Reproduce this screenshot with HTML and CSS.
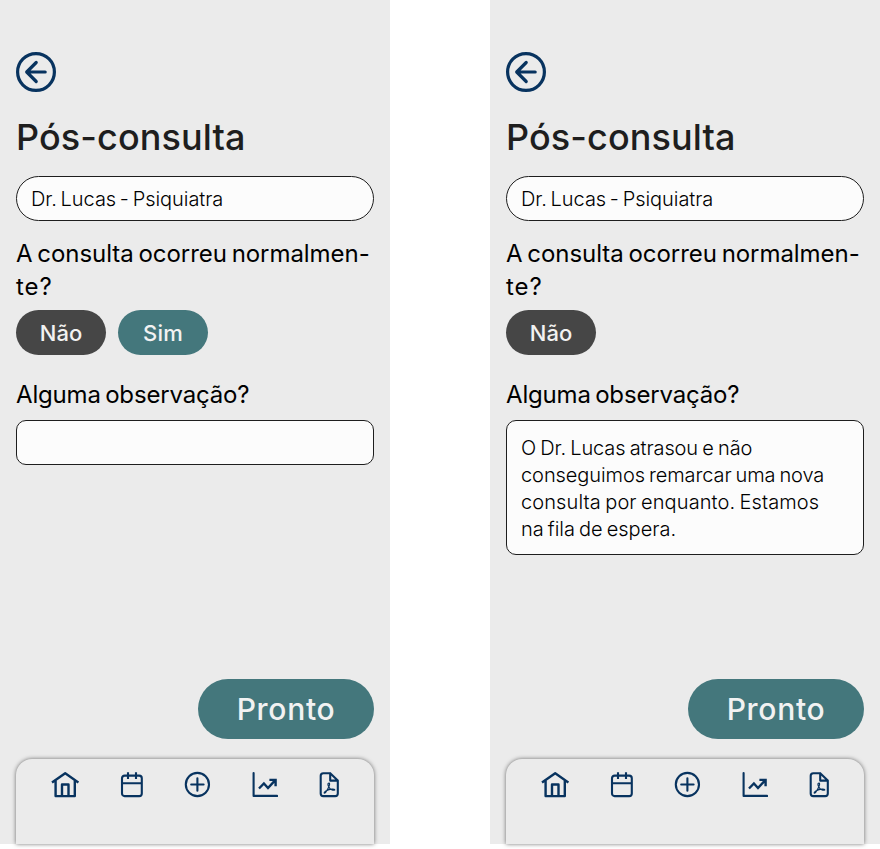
FILE: index.html
```html
<!DOCTYPE html>
<html lang="pt-BR">
<head>
<meta charset="utf-8">
<title>Pós-consulta</title>
<link rel="stylesheet" href="styles.css">
</head>
<body>
<svg class="sprite" aria-hidden="true">
  <symbol id="back" viewBox="0 0 40 40"><circle cx="20" cy="20" r="18.4" stroke-width="3.2"/><path d="M29.2 20H11M20.2 10.5 10.7 20l9.5 9.5" stroke-width="3.2" stroke-linecap="round" stroke-linejoin="round"/></symbol>
  <symbol id="home" viewBox="0 0 28 28"><path d="M1 11.5 14.2 2.2 27.4 11.5M4.6 9.5V25.1H23.8V9.5M11 25V13.5H17.5V25" stroke-width="2.4" stroke-linejoin="round"/></symbol>
  <symbol id="calendar" viewBox="0 0 28 28"><rect x="5" y="4.6" width="19.8" height="20.5" rx="2.6"/><path d="M5 12.2H24.8M11 1.2V8M19 1.2V8"/></symbol>
  <symbol id="plus" viewBox="0 0 28 28"><circle cx="14.4" cy="13.5" r="11.6"/><path d="M8.2 13.5H20.6M14.4 7.3V19.7" stroke-linecap="round"/></symbol>
  <symbol id="chart" viewBox="0 0 28 28"><path d="M3.6 2V24.9H27.2" stroke-linecap="round" stroke-linejoin="round"/><path d="M9 17.5 13.9 12.5 18 17 25.3 9.1M19.4 8.9H25.6V15.2" stroke-width="2.4"/></symbol>
  <symbol id="pdf" viewBox="0 0 28 28"><path d="M15.2 2.2H8.3A2.6 2.6 0 0 0 5.7 4.8V22.5A2.6 2.6 0 0 0 8.3 25.1H20.2A2.6 2.6 0 0 0 22.8 22.5V9.6L15.2 2.2V9.6H22.8" stroke-linejoin="round"/><path d="M14.1 12.1C12.6 11.8 12.6 14.3 13.9 16 14.9 18.5 18.3 19.8 19.7 19 20.2 17.6 15 17.6 10.9 19.9 8 21.9 9.1 23 10.9 21 12.9 18.3 15.7 12.8 14.1 12.1Z" stroke-width="1.2"/></symbol>
</svg>
<main class="board">
  <section class="phone">
    <svg class="back"><use href="#back"/></svg>
    <h1>Pós-consulta</h1>
    <div class="field">Dr. Lucas - Psiquiatra</div>
    <h2 class="question">A consulta ocorreu normalmen-<br><span class="q2">te?</span></h2>
    <div class="choices"><button class="no">Não</button><button class="yes">Sim</button></div>
    <h2 class="notes-label">Alguma observação?</h2>
    <div class="notes"></div>
    <button class="done">Pronto</button>
    <nav>
      <svg><use href="#home"/></svg><svg><use href="#calendar"/></svg><svg><use href="#plus"/></svg><svg class="chart"><use href="#chart"/></svg><svg class="pdf"><use href="#pdf"/></svg>
    </nav>
  </section>
  <section class="phone">
    <svg class="back"><use href="#back"/></svg>
    <h1>Pós-consulta</h1>
    <div class="field">Dr. Lucas - Psiquiatra</div>
    <h2 class="question">A consulta ocorreu normalmen-<br><span class="q2">te?</span></h2>
    <div class="choices"><button class="no">Não</button></div>
    <h2 class="notes-label">Alguma observação?</h2>
    <div class="notes filled"><span class="n1">O Dr. Lucas atrasou e não</span><br><span class="n2">conseguimos remarcar uma nova</span><br><span class="n3">consulta por enquanto. Estamos</span><br><span class="n4">na fila de espera.</span></div>
    <button class="done">Pronto</button>
    <nav>
      <svg><use href="#home"/></svg><svg><use href="#calendar"/></svg><svg><use href="#plus"/></svg><svg class="chart"><use href="#chart"/></svg><svg class="pdf"><use href="#pdf"/></svg>
    </nav>
  </section>
</main>
</body>
</html>
```
FILE: styles.css
```css
* { box-sizing: border-box; }
body { margin: 0; background: #fff; font-family: Inter, sans-serif; color: #000; }
.sprite { display: none; }
svg { fill: none; stroke: #08335f; stroke-width: 2.1; }
.board { display: flex; justify-content: space-between; width: 880px; height: 849px; }
.phone { display: flex; flex-direction: column; width: 390px; height: 844px; padding: 52px 16px 0; background: #ebebeb; }
.back { width: 40px; height: 40px; flex: none; }
h1, h2 { margin: 0; white-space: nowrap; }
h1 { margin-top: 20px; height: 49px; font-size: 36px; font-weight: 500; line-height: 50px; letter-spacing: 0.1px; color: #1e1e1e; }
.field { margin-top: 15px; height: 45px; padding: 0 14px; border: 1px solid #1e1e1e; border-radius: 23px; background: #fcfcfc; font-size: 20px; font-weight: 300; line-height: 44px; letter-spacing: -0.05px; word-spacing: -1.8px; }
h2 { font-size: 24px; font-weight: 400; line-height: 33px; letter-spacing: -0.05px; word-spacing: -1.9px; }
.question { margin-top: 16px; height: 66px; }
.q2 { letter-spacing: 1px; }
.choices { display: flex; gap: 12px; margin-top: 7px; }
button { border: 0; padding: 0; font-family: Inter, sans-serif; font-weight: 500; color: #f2f2f2; background: #44777c; }
.choices button { width: 90px; height: 45px; border-radius: 23px; font-size: 22px; line-height: 46px; }
.choices .no { background: #464646; }
.choices .yes { letter-spacing: 0.3px; }
.notes-label { margin-top: 23px; height: 33px; letter-spacing: -0.17px; word-spacing: -2.2px; }
.notes { margin-top: 9px; height: 45px; padding: 14px 14px 0; border: 1px solid #1e1e1e; border-radius: 10px; background: #fcfcfc; font-size: 20px; font-weight: 300; line-height: 27px; white-space: nowrap; }
.notes.filled { height: 135px; }
.n1 { letter-spacing: -0.1px; word-spacing: -1.3px; }
.n2 { letter-spacing: -0.08px; word-spacing: -1.6px; }
.n3 { letter-spacing: 0.1px; word-spacing: -1.3px; }
.n4 { letter-spacing: 0; word-spacing: -1.6px; }
.done { flex: none; align-self: flex-end; width: 176px; height: 60px; margin-top: auto; border-radius: 30px; font-size: 30px; line-height: 60px; letter-spacing: 0.7px; }
nav { display: flex; flex: none; justify-content: space-between; height: 85px; margin-top: 20px; padding: 12px 31px 0 35px; border-radius: 16px 16px 0 0; background: #ebebeb; box-shadow: 0 0 4px rgba(0, 0, 0, 0.55); }
nav svg { width: 28px; height: 28px; }
nav .chart { margin: 0 -0.5px 0 0.5px; }
```
